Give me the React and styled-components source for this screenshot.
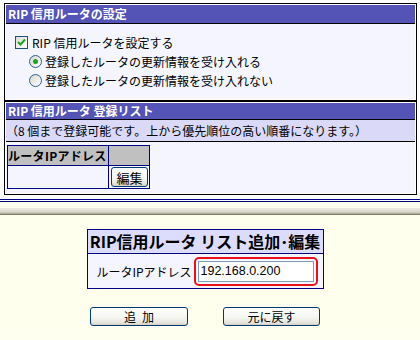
import React from "react"
import styled, { createGlobalStyle } from "styled-components"

const GlobalStyle = createGlobalStyle`
  html, body {
    margin: 0;
    padding: 0;
    background: #fffff0;
  }
  body {
    font-family: "Noto Sans CJK JP", "DejaVu Sans", sans-serif;
    font-size: 12px;
    color: #000;
  }
  * {
    box-sizing: border-box;
  }
`

const Page = styled.div`
  width: 420px;
  height: 340px;
  overflow: hidden;
  background: #fffff0;
`

const TopFrame = styled.div`
  background: #fff;
  padding: 3px 3px 0 4px;
`

const Panel = styled.div`
  border: 1px solid #000;
  padding: 1px;
  background: #fff;
  height: ${(p) => p.$height}px;
  display: flex;
  flex-direction: column;
`

const Header = styled.div`
  background: #5354b5;
  color: #fff;
  font-weight: bold;
  height: ${(p) => p.$height + 1}px;
  line-height: ${(p) => p.$height}px;
  border-bottom: 1px solid #000;
  padding-left: 2px;
  white-space: nowrap;
`

const Note = styled.div`
  background: #dadaf8;
  height: 22px;
  line-height: 21px;
  border-bottom: 1px solid #000;
  white-space: nowrap;
`

const Body = styled.div`
  flex: 1;
  background: #f5f5ff;
  padding: ${(p) => p.$pad};
`

const OptionRow = styled.label`
  display: flex;
  align-items: center;
  height: 19px;
  padding-left: ${(p) => p.$indent}px;
  gap: ${(p) => p.$gap}px;
  white-space: nowrap;
`

const CheckBoxBox = styled.span`
  width: 13px;
  height: 13px;
  border: 1px solid #1c5180;
  background: linear-gradient(135deg, #dcdcd7, #fff);
  display: inline-flex;
  align-items: center;
  justify-content: center;
`

const RadioBox = styled.span`
  width: 13px;
  height: 13px;
  border-radius: 50%;
  border: 1px solid #2f5f8f;
  background: linear-gradient(135deg, #d6d6d0, #fff);
  display: inline-flex;
  align-items: center;
  justify-content: center;

  &::after {
    content: "";
    width: 5px;
    height: 5px;
    border-radius: 50%;
    background: ${(p) => (p.$checked ? "#21a121" : "transparent")};
  }
`

const CheckBox = () => (
  <CheckBoxBox>
    <svg width="9" height="9" viewBox="0 0 9 9">
      <path d="M1 4 L3.5 6.5 L8 1.5" fill="none" stroke="#21a121" strokeWidth="2" />
    </svg>
  </CheckBoxBox>
)

const ListTable = styled.table`
  border-collapse: collapse;
  border: 1px solid #000080;

  th,
  td {
    border: 1px solid #000080;
    padding: 0;
  }

  th {
    background: #c0c0c0;
    height: 20px;
    font-weight: bold;
    text-align: left;
    font-size: 12px;
    letter-spacing: 0.3px;
    white-space: nowrap;
  }

  td {
    height: 23px;
    vertical-align: top;
  }
`

const XpButton = styled.button`
  font-family: "Noto Sans CJK JP", sans-serif;
  font-size: 12px;
  color: #000;
  width: ${(p) => p.$width}px;
  height: ${(p) => p.$height}px;
  padding: 0;
  line-height: 1;
  border: 1px solid #003c74;
  border-radius: 3px;
  background: linear-gradient(#ffffff, #f4f4f0 60%, #dcdad0);
  box-shadow: inset 0 -1px 0 #d6d0c5;
  white-space: pre;
`

const EditButton = styled(XpButton)`
  margin: 1px 0 0 2px;
  display: block;
  font-size: 13px;
`

const DoubleRule = styled.div`
  margin: 4px -3px 0 -4px;
  height: 3px;
  border-top: 1px solid #000080;
  border-bottom: 1px solid #000080;
  background: #fff;
`

const CreamStrip = styled.div`
  height: 6px;
  background: #fffff0;
`

const FrameBorder = styled.div`
  height: 7px;
  background: linear-gradient(#ecebe4, #e0ded4 40%, #c4c0ae 75%, #7e7c6a 90%, #7e7c6a);
`

const BottomFrame = styled.div`
  background: #ffffee;
  padding: 14px 10px 0 0;
  display: flex;
  flex-direction: column;
  align-items: center;
`

const EditBox = styled.div`
  width: 237px;
  border: 1px solid #000080;
`

const EditHeader = styled.div`
  background: #dcdcfc;
  height: 24px;
  line-height: 23px;
  border-bottom: 1px solid #000080;
  font-size: 16px;
  font-weight: bold;
  text-align: center;
  white-space: nowrap;
`

const EditBody = styled.div`
  background: #f5f5ff;
  height: 34px;
  display: flex;
  align-items: center;
  justify-content: flex-end;
  padding-right: 5px;
  gap: 2px;
`

const FieldLabel = styled.span`
  white-space: nowrap;
`

const Highlight = styled.span`
  display: inline-flex;
  border: 2px solid #e8101a;
  border-radius: 5px;
  padding: 2px;
`

const TextInput = styled.input`
  width: 116px;
  height: 21px;
  border: 1px solid #7f9db9;
  background: #fff;
  padding: 0 2px;
  font-family: "Liberation Sans", Arial, sans-serif;
  font-size: 12.5px;
  color: #000;
  outline: none;
`

const ButtonRow = styled.div`
  display: flex;
  gap: 35px;
  margin-top: 18px;
`

const App = () => {
  return (
    <Page>
      <GlobalStyle />
      <TopFrame>
        <Panel $height={98}>
          <Header $height={18}>RIP 信用ルータの設定</Header>
          <Body $pad="9px 0 0 9px">
            <OptionRow $indent={0} $gap={4}>
              <CheckBox />
              RIP 信用ルータを設定する
            </OptionRow>
            <OptionRow $indent={14} $gap={3}>
              <RadioBox $checked />
              登録したルータの更新情報を受け入れる
            </OptionRow>
            <OptionRow $indent={14} $gap={3}>
              <RadioBox />
              登録したルータの更新情報を受け入れない
            </OptionRow>
          </Body>
        </Panel>
        <Panel $height={94}>
          <Header $height={16}>RIP 信用ルータ 登録リスト</Header>
          <Note>（8 個まで登録可能です。上から優先順位の高い順番になります。）</Note>
          <Body $pad="3px 0 0 1px">
            <ListTable>
              <thead>
                <tr>
                  <th style={{ width: 101 }}>ルータIPアドレス</th>
                  <th style={{ width: 41 }}></th>
                </tr>
              </thead>
              <tbody>
                <tr>
                  <td></td>
                  <td>
                    <EditButton $width={37} $height={20}>編集</EditButton>
                  </td>
                </tr>
              </tbody>
            </ListTable>
          </Body>
        </Panel>
        <DoubleRule />
      </TopFrame>
      <CreamStrip />
      <FrameBorder />
      <BottomFrame>
        <EditBox>
          <EditHeader>RIP信用ルータ リスト追加･編集</EditHeader>
          <EditBody>
            <FieldLabel>ルータIPアドレス</FieldLabel>
            <Highlight>
              <TextInput defaultValue="192.168.0.200" />
            </Highlight>
          </EditBody>
        </EditBox>
        <ButtonRow>
          <XpButton $width={98} $height={19}>{"追\u2002加"}</XpButton>
          <XpButton $width={97} $height={19}>元に戻す</XpButton>
        </ButtonRow>
      </BottomFrame>
    </Page>
  )
}

export default App
